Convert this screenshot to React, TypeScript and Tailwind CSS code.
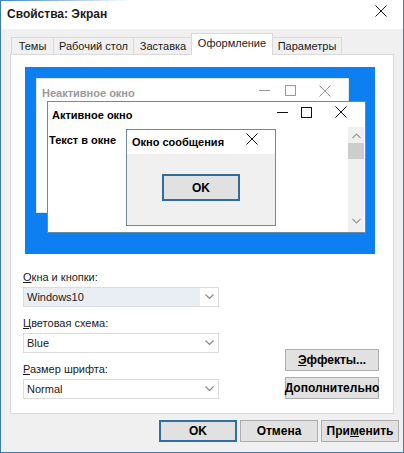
import React from "react";

const tabs = [
  { label: "Темы", w: "w-[43px]", ml: "" },
  { label: "Рабочий стол", w: "w-[81px]", ml: "-ml-px" },
  { label: "Заставка", w: "w-[60px]", ml: "-ml-px" },
  { label: "Оформление", w: "w-[82px]", ml: "-ml-[2px]", active: true },
  { label: "Параметры", w: "w-[70px]", ml: "-ml-px" },
];

function Chevron() {
  return (
    <svg width="9" height="6" viewBox="0 0 9 6" className="shrink-0">
      <polyline points="0.5,0.5 4.5,4.5 8.5,0.5" fill="none" stroke="#8a8a8a" strokeWidth="1.2" />
    </svg>
  );
}

function Controls({ color, minW, maxW, closeW }: { color: string; minW: string; maxW: string; closeW: string }) {
  return (
    <div className="flex items-center">
      <div className={`${minW} h-[14px] flex items-center justify-center`}>
        <svg width="11" height="11" viewBox="0 0 11 11"><line x1="0" y1="5.5" x2="11" y2="5.5" stroke={color} strokeWidth="1" /></svg>
      </div>
      <div className={`${maxW} h-[14px] flex items-center justify-center`}>
        <svg width="11" height="11" viewBox="0 0 11 11"><rect x="0.5" y="0.5" width="10" height="10" fill="none" stroke={color} strokeWidth="1" /></svg>
      </div>
      <div className={`${closeW} h-[14px] flex items-center justify-center`}>
        <svg width="12" height="12" viewBox="0 0 12 12"><path d="M0.5 0.5 L11.5 11.5 M11.5 0.5 L0.5 11.5" stroke={color} strokeWidth="1" /></svg>
      </div>
    </div>
  );
}

function Select({ value, label, accel, highlight }: { value: string; label: string; accel: string; highlight?: boolean }) {
  return (
    <div>
      <p className="h-[14px] leading-[14px] text-[11px] text-[#1a1a1a]">
        <span className="underline underline-offset-[1px]">{accel}</span>
        {label}
      </p>
      <div className="mt-[3px] h-[20px] border border-[#dcdcdc] bg-white flex items-center">
        <div className={`h-full w-[176px] pl-[3px] flex items-center ${highlight ? "bg-[#e8eef4]" : ""}`}>
          <span className="text-[11px] text-[#1a1a1a]">{value}</span>
        </div>
        <div className="flex-1 flex items-center justify-center">
          <Chevron />
        </div>
      </div>
    </div>
  );
}

export default function App() {
  return (
    <div className="w-[404px] h-[453px] bg-[#f0f0f0] border-l border-r border-b border-[#3d7cb4] flex flex-col font-['Liberation_Sans',Arial,sans-serif] text-black overflow-hidden">
      {/* Title bar */}
      <div className="bg-white h-[29px] flex flex-col">
        <div className="h-px w-[130px] bg-gradient-to-r from-[#3d84c6] to-white" />
        <div className="flex items-start justify-between pl-[6px] pr-[16px]">
          <span className="mt-[6px] text-[12px] leading-[14px] font-bold text-[#1a1a1a]">Свойства: Экран</span>
          <svg width="12" height="12" viewBox="0 0 12 12" className="mt-[4px]">
            <path d="M0.5 0.5 L11.5 11.5 M11.5 0.5 L0.5 11.5" stroke="#222" strokeWidth="1" />
          </svg>
        </div>
      </div>

      {/* Tabs */}
      <div className="mt-[4px] ml-[10px] h-[21px] flex items-end">
        {tabs.map((t) =>
          t.active ? (
            <div key={t.label} className={`${t.w} ${t.ml} h-[22px] -mb-px relative z-10 bg-white border-l border-r border-t border-[#d9d9d9] flex items-center justify-center pb-[2px] text-[11px] text-[#1a1a1a]`}>
              {t.label}
            </div>
          ) : (
            <div key={t.label} className={`${t.w} ${t.ml} h-[17px] bg-[#f0f0f0] border-l border-r border-t border-[#d9d9d9] flex items-center justify-center text-[11px] text-[#1a1a1a]`}>
              {t.label}
            </div>
          )
        )}
      </div>

      {/* Tab panel */}
      <div className="ml-[9px] w-[384px] h-[360px] bg-white border border-[#d9d9d9] pl-[12px] pt-[12px]">
        {/* Preview */}
        <div className="ml-[2px] w-[350px] h-[187px] bg-[#0d7ff0] relative">
          {/* Inactive window */}
          <div className="absolute left-[11px] top-[11px] w-[313px] h-[135px] bg-white border border-[#dde4ea]">
            <div className="h-[26px] flex items-center justify-between pl-[5px] pr-[1px]">
              <span className="text-[11px] font-bold text-[#9a9a9a] mt-[2px]">Неактивное окно</span>
              <div className="-mt-[3px]">
                <Controls color="#9a9a9a" minW="w-[26px]" maxW="w-[26px]" closeW="w-[44px]" />
              </div>
            </div>
          </div>

          {/* Active window */}
          <div className="absolute left-[22px] top-[34px] w-[319px] h-[132px] bg-white border border-[#6a8aa5] flex flex-col">
            <div className="h-[25px] flex items-center justify-between pl-[4px] pr-[1px]">
              <span className="text-[11px] font-bold text-black mt-[1px]">Активное окно</span>
              <div className="-mt-[5px]">
                <Controls color="#111" minW="w-[24px]" maxW="w-[24px]" closeW="w-[46px]" />
              </div>
            </div>
            <div className="flex-1 flex pl-[1px] pr-[1px]">
              <div className="flex-1 pt-[0px]">
                <span className="text-[11px] font-bold text-black">Текст в окне</span>
              </div>
              <div className="w-[16px] bg-[#f0f0f0] flex flex-col items-center">
                <svg width="9" height="6" viewBox="0 0 9 6" className="mt-[6px]">
                  <polyline points="0.5,5 4.5,1 8.5,5" fill="none" stroke="#9a9a9a" strokeWidth="1.2" />
                </svg>
                <div className="mt-[4px] w-full h-[16px] bg-[#cdcdcd]" />
                <div className="flex-1" />
                <svg width="9" height="6" viewBox="0 0 9 6" className="mb-[8px]">
                  <polyline points="0.5,1 4.5,5 8.5,1" fill="none" stroke="#9a9a9a" strokeWidth="1.2" />
                </svg>
              </div>
            </div>
          </div>

          {/* Message box */}
          <div className="absolute left-[101px] top-[62px] w-[150px] h-[97px] border border-[#6d8aa3] bg-[#f0f0f0] flex flex-col">
            <div className="h-[24px] bg-white flex items-start justify-between pl-[5px] pr-[17px]">
              <span className="mt-[5px] text-[11px] leading-[14px] font-bold text-black">Окно сообщения</span>
              <svg width="12" height="12" viewBox="0 0 12 12" className="mt-[3px]">
                <path d="M0.5 0.5 L11.5 11.5 M11.5 0.5 L0.5 11.5" stroke="#111" strokeWidth="1" />
              </svg>
            </div>
            <div className="flex justify-center pt-[20px]">
              <div className="w-[78px] h-[27px] bg-[#e1e1e1] border-2 border-[#2f6c9d] flex items-center justify-center text-[12px] font-bold text-black">
                OK
              </div>
            </div>
          </div>
        </div>

        {/* Form */}
        <div className="mt-[16px] flex pr-[14px]">
          <div className="w-[196px] flex flex-col gap-[9px]">
            <Select accel="О" label="кна и кнопки:" value="Windows10" highlight />
            <Select accel="Ц" label="ветовая схема:" value="Blue" />
            <Select accel="Р" label="азмер шрифта:" value="Normal" />
          </div>
          <div className="ml-auto w-[94px] pt-[79px] flex flex-col gap-[6px]">
            <div className="h-[22px] bg-[#e1e1e1] border border-[#adadad] flex items-center justify-center text-[12px] font-bold text-black">
              <span><span className="underline underline-offset-[1px]">Э</span>ффекты...</span>
            </div>
            <div className="h-[22px] bg-[#e1e1e1] border border-[#adadad] flex items-center justify-center text-[12px] font-bold text-black">
              <span><span className="underline underline-offset-[1px]">Д</span>ополнительно</span>
            </div>
          </div>
        </div>
      </div>

      {/* Bottom buttons */}
      <div className="mt-[6px] flex justify-end gap-[3px] pr-[4px]">
        <div className="w-[78px] h-[22px] bg-[#e1e1e1] border-2 border-[#2f6fa6] flex items-center justify-center text-[12px] font-bold text-black">
          OK
        </div>
        <div className="w-[78px] h-[22px] bg-[#e1e1e1] border border-[#adadad] flex items-center justify-center text-[12px] font-bold text-black">
          Отмена
        </div>
        <div className="w-[78px] h-[22px] bg-[#e1e1e1] border border-[#adadad] flex items-center justify-center text-[12px] font-bold text-black">
          <span>При<span className="underline underline-offset-[1px]">м</span>енить</span>
        </div>
      </div>
    </div>
  );
}
